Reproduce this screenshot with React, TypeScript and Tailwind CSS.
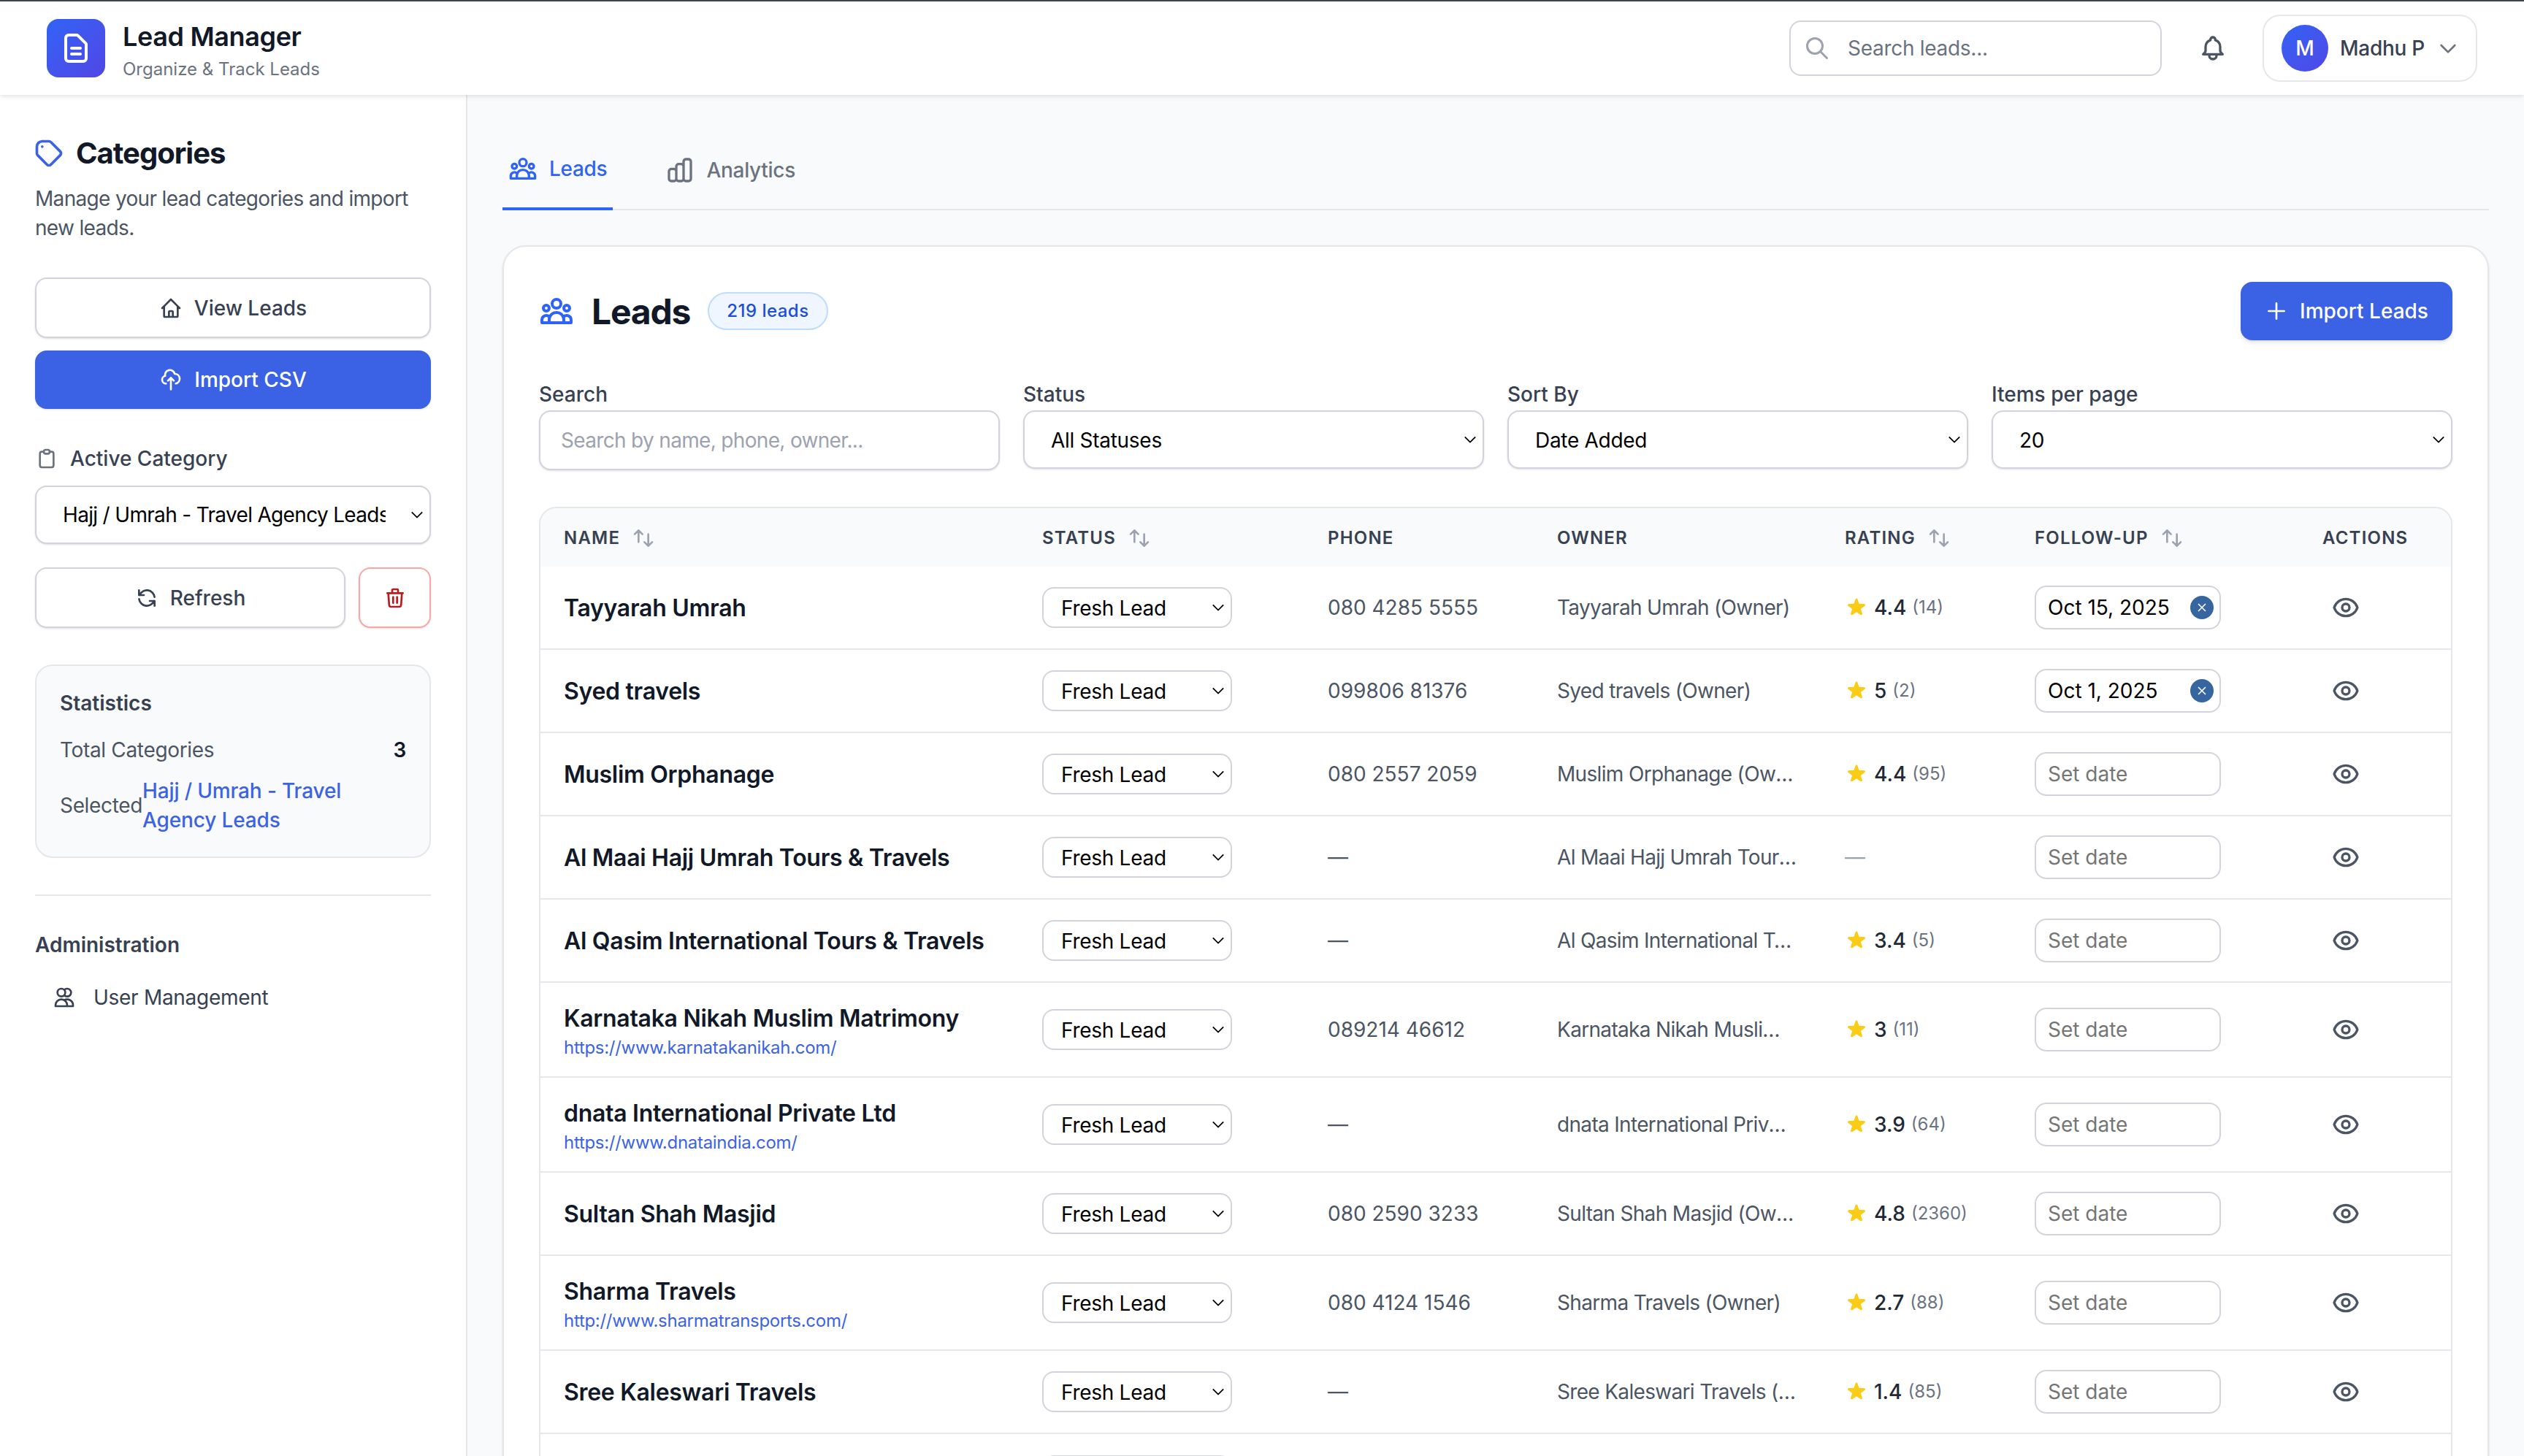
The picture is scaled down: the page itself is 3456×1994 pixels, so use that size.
import {
  HiOutlineBell,
  HiOutlineChartBar,
  HiOutlineChevronDown,
  HiOutlineClipboard,
  HiOutlineCloudUpload,
  HiOutlineDocumentText,
  HiOutlineEye,
  HiOutlineHome,
  HiOutlinePlus,
  HiOutlineRefresh,
  HiOutlineSearch,
  HiOutlineSwitchVertical,
  HiOutlineTag,
  HiOutlineTrash,
  HiOutlineUserGroup,
  HiOutlineUsers,
  HiStar,
} from "react-icons/hi"

type Lead = {
  name: string
  url?: string
  phone?: string
  owner: string
  rating?: string
  count?: string
  date?: string
}

const leads: Lead[] = [
  { name: "Tayyarah Umrah", phone: "080 4285 5555", owner: "Tayyarah Umrah (Owner)", rating: "4.4", count: "(14)", date: "Oct 15, 2025" },
  { name: "Syed travels", phone: "099806 81376", owner: "Syed travels (Owner)", rating: "5", count: "(2)", date: "Oct 1, 2025" },
  { name: "Muslim Orphanage", phone: "080 2557 2059", owner: "Muslim Orphanage (Owner)", rating: "4.4", count: "(95)" },
  { name: "Al Maai Hajj Umrah Tours & Travels", owner: "Al Maai Hajj Umrah Tours & Travels (Owner)" },
  { name: "Al Qasim International Tours & Travels", owner: "Al Qasim International Tours & Travels (Owner)", rating: "3.4", count: "(5)" },
  { name: "Karnataka Nikah Muslim Matrimony", url: "https://www.karnatakanikah.com/", phone: "089214 46612", owner: "Karnataka Nikah Muslim Matrimony (Owner)", rating: "3", count: "(11)" },
  { name: "dnata International Private Ltd", url: "https://www.dnataindia.com/", owner: "dnata International Private Ltd (Owner)", rating: "3.9", count: "(64)" },
  { name: "Sultan Shah Masjid", phone: "080 2590 3233", owner: "Sultan Shah Masjid (Owner)", rating: "4.8", count: "(2360)" },
  { name: "Sharma Travels", url: "http://www.sharmatransports.com/", phone: "080 4124 1546", owner: "Sharma Travels (Owner)", rating: "2.7", count: "(88)" },
  { name: "Sree Kaleswari Travels", owner: "Sree Kaleswari Travels (Owner)", rating: "1.4", count: "(85)" },
]

function SelectChevron() {
  return (
    <svg viewBox="0 0 20 12" className="pointer-events-none absolute right-[10px] top-1/2 h-[12px] w-[18px] -translate-y-1/2 text-black" fill="none" stroke="currentColor" strokeWidth="2">
      <path d="M2 2l8 8 8-8" />
    </svg>
  )
}

function NativeSelect({ value, className, wrapClass = "" }: { value: string; className: string; wrapClass?: string }) {
  return (
    <div className={`relative ${wrapClass}`}>
      <select defaultValue={value} className={`block w-full appearance-none border-2 border-[#d1d5db] bg-white text-[28px] text-black outline-none ${className}`}>
        <option>{value}</option>
      </select>
      <SelectChevron />
    </div>
  )
}

function SortHead({ label }: { label: string }) {
  return (
    <span className="flex items-center gap-4">
      {label}
      <HiOutlineSwitchVertical className="h-[32px] w-[32px] text-[#9ca3af]" />
    </span>
  )
}

function LeadRow({ lead }: { lead: Lead }) {
  const td = "border-b-2 border-[#e5e7eb] px-[32px] align-middle"
  return (
    <tr className={lead.url ? "h-[130px]" : "h-[114px]"}>
      <td className={td}>
        <div className="pt-[1px] text-[32px] font-semibold leading-[48px] text-[#111827]">{lead.name}</div>
        {lead.url && <div className="text-[24px] leading-[32px] text-[#3b63e4]">{lead.url}</div>}
      </td>
      <td className={td}>
        <NativeSelect value="Fresh Lead" wrapClass="w-[260px]" className="h-[56px] rounded-[16px] pl-[24px] pr-[40px] pt-[2px]" />
      </td>
      <td className={`${td} text-[28px] tracking-normal text-[#4b5563]`}>{lead.phone ?? "—"}</td>
      <td className={`${td} text-[28px] tracking-[-0.024em] text-[#4b5563]`}>
        <div className="w-[328px] truncate">{lead.owner}</div>
      </td>
      <td className={td}>
        {lead.rating ? (
          <div className="flex items-center gap-2 tracking-normal">
            <HiStar className="h-[32px] w-[32px] text-[#facc15]" />
            <span className="text-[28px] font-medium text-[#1f2937]">{lead.rating}</span>
            <span className="text-[24px] text-[#6b7280]">{lead.count}</span>
          </div>
        ) : (
          <span className="text-[28px] text-[#9ca3af]">—</span>
        )}
      </td>
      <td className={td}>
        <div className="relative w-[255px]">
          <input
            readOnly
            value={lead.date ?? ""}
            placeholder="Set date"
            className="block h-[60px] w-full rounded-[16px] border-2 border-[#d1d5db] bg-white pl-[16px] text-[28px] tracking-normal text-black outline-none placeholder:text-[#757575]"
          />
          {lead.date && (
            <span className="absolute right-[10px] top-[14px] flex h-[32px] w-[32px] items-center justify-center rounded-full bg-[#36659f]">
              <svg viewBox="0 0 12 12" className="h-[12px] w-[12px]" fill="none" stroke="white" strokeWidth="1.6">
                <path d="M1 1l10 10M11 1L1 11" />
              </svg>
            </span>
          )}
        </div>
      </td>
      <td className={td}>
        <button className="p-3 text-[#4b5563]">
          <HiOutlineEye className="h-[40px] w-[40px]" />
        </button>
      </td>
    </tr>
  )
}

function Sidebar() {
  return (
    <aside className="w-[640px] shrink-0 border-r-2 border-[#e5e7eb] bg-white p-[48px]">
      <div className="mt-[4px] flex items-center gap-[15px]">
        <HiOutlineTag className="-ml-[3px] h-[44px] w-[44px] text-[#3b63e4]" />
        <h2 className="text-[40px] font-bold leading-[56px] tracking-[-0.025em] text-[#111827]">Categories</h2>
      </div>
      <p className="mt-[14px] text-[28px] leading-[40px] tracking-[-0.024em] text-[#4b5563]">Manage your lead categories and import new leads.</p>

      <button className="mt-[48px] flex h-[83px] w-full items-center justify-center gap-4 rounded-[16px] border-2 border-[#d1d5db] bg-white text-[28px] font-medium tracking-normal text-[#374151] shadow-sm">
        <HiOutlineHome className="h-[32px] w-[32px]" />
        View Leads
      </button>
      <button className="mt-[17px] flex h-[80px] w-full items-center justify-center gap-4 rounded-[16px] bg-[#3b62e4] text-[28px] font-medium tracking-normal text-white shadow-sm">
        <HiOutlineCloudUpload className="h-[32px] w-[32px]" />
        Import CSV
      </button>

      <div className="mt-[48px] flex items-center gap-4 text-[28px] font-medium leading-[40px] tracking-normal text-[#374151]">
        <HiOutlineClipboard className="h-[32px] w-[32px] text-[#6b7280]" />
        Active Category
      </div>
      <div className="mt-[17px]">
        <NativeSelect value="Hajj / Umrah - Travel Agency Leads" className="h-[80px] rounded-[16px] pl-[36px] pr-[60px] tracking-[-0.024em] shadow-sm" />
      </div>

      <div className="mt-[32px] flex gap-[18px]">
        <button className="flex h-[83px] flex-1 items-center justify-center gap-4 rounded-[16px] border-2 border-[#d1d5db] bg-white text-[28px] font-medium tracking-normal text-[#374151] shadow-sm">
          <HiOutlineRefresh className="h-[32px] w-[32px]" />
          Refresh
        </button>
        <button className="flex h-[83px] w-[99px] items-center justify-center rounded-[16px] border-2 border-[#fca5a5] bg-white text-[#b91c1c] shadow-sm">
          <HiOutlineTrash className="h-[32px] w-[32px]" />
        </button>
      </div>

      <div className="mt-[50px] rounded-[24px] border-2 border-[#e5e7eb] bg-[#f9fafb] px-[32px] pb-[30px] pt-[31px]">
        <h3 className="text-[28px] font-semibold leading-[40px] tracking-normal text-[#374151]">Statistics</h3>
        <div className="mt-[24px] flex items-center justify-between text-[28px] leading-[40px] tracking-[-0.012em]">
          <span className="text-[#4b5563]">Total Categories</span>
          <span className="font-semibold text-[#111827]">3</span>
        </div>
        <div className="mt-[16px] flex items-center text-[28px] leading-[40px] tracking-[-0.012em]">
          <span className="text-[#4b5563]">Selected</span>
          <span className="font-medium tracking-[-0.005em] text-[#3b63e4]">Hajj / Umrah - Travel Agency Leads</span>
        </div>
      </div>

      <div className="mt-[50px] border-t-2 border-[#e5e7eb] pt-[47px]">
        <h3 className="text-[28px] font-semibold leading-[40px] tracking-normal text-[#374151]">Administration</h3>
        <div className="mt-[32px] flex items-center gap-[24px] pl-[24px] text-[28px] leading-[40px] text-[#374151]">
          <HiOutlineUsers className="h-[32px] w-[32px]" />
          User Management
        </div>
      </div>
    </aside>
  )
}

export default function App() {
  return (
    <div className="flex h-[1994px] w-full flex-col overflow-hidden bg-[#f9fafb] font-['Inter',sans-serif] tracking-[-0.018em]">
      <header className="relative z-10 flex h-[130px] shrink-0 items-center border-t-2 border-[#3f444b] bg-white px-[64px] shadow-[0_2px_6px_rgba(0,0,0,0.12)]">
        <div className="flex h-[80px] w-[80px] items-center justify-center rounded-[16px] bg-gradient-to-br from-[#2f63f5] to-[#4f46e5] text-white">
          <HiOutlineDocumentText className="h-[48px] w-[48px]" />
        </div>
        <div className="ml-[24px]">
          <div className="text-[36px] font-semibold leading-[58px] tracking-[-0.01em] text-[#111827]">Lead Manager</div>
          <div className="text-[24px] leading-[32px] tracking-normal text-[#6b7280]">Organize &amp; Track Leads</div>
        </div>
        <div className="ml-auto flex items-center gap-[32px]">
          <div className="relative mr-[2px] w-[510px]">
            <HiOutlineSearch className="absolute left-[20px] top-[20px] h-[36px] w-[36px] text-[#9ca3af]" />
            <input
              placeholder="Search leads..."
              className="block h-[76px] w-full rounded-[16px] border-2 border-[#d1d5db] bg-white pl-[78px] text-[28px] outline-none placeholder:text-[#6b7280]"
            />
          </div>
          <button className="p-[16px] text-[#4b5563]">
            <HiOutlineBell className="h-[40px] w-[40px]" />
          </button>
          <button className="flex h-[92px] w-[294px] items-center gap-4 rounded-[24px] border-2 border-[#e5e7eb] bg-white pl-[24px]">
            <span className="flex h-[64px] w-[64px] items-center justify-center rounded-full bg-gradient-to-br from-[#2f63f5] to-[#4f46e5] text-[28px] font-medium text-white">M</span>
            <span className="text-[28px] font-medium text-[#374151]">Madhu P</span>
            <HiOutlineChevronDown className="h-[32px] w-[32px] text-[#6b7280]" />
          </button>
        </div>
      </header>

      <div className="flex min-h-0 flex-1">
        <Sidebar />
        <main className="min-w-0 flex-1 px-[48px] pt-[48px]">
          <div className="flex gap-[64px] border-b-2 border-[#e5e7eb]">
            <div className="-mb-[2px] flex h-[110px] items-center gap-4 border-b-4 border-[#2f63f5] px-2 text-[28px] font-medium text-[#2f63f5]">
              <HiOutlineUserGroup className="h-[40px] w-[40px]" />
              Leads
            </div>
            <div className="-mb-[2px] flex h-[110px] items-center gap-4 px-2 text-[28px] font-medium text-[#6b7280]">
              <HiOutlineChartBar className="h-[40px] w-[40px]" />
              Analytics
            </div>
          </div>

          <section className="mt-[48px] rounded-[32px] border-2 border-[#e5e7eb] bg-white p-[48px] shadow-sm">
            <div className="flex h-[80px] items-center">
              <HiOutlineUserGroup className="h-[48px] w-[48px] text-[#2f63f5]" />
              <h1 className="ml-[24px] pt-[2px] text-[48px] font-bold leading-[64px] tracking-[-0.025em] text-[#111827]">Leads</h1>
              <span className="ml-[24px] flex h-[52px] items-center rounded-full border-2 border-[#bfdbfe] bg-[#eff6ff] px-[24px] text-[24px] font-medium tracking-[0.02em] text-[#1d4ed8]">219 leads</span>
              <button className="ml-auto flex h-[80px] w-[290px] items-center justify-center gap-4 rounded-[16px] bg-[#3b62e4] text-[28px] font-medium tracking-normal text-white shadow-md">
                <HiOutlinePlus className="h-[32px] w-[32px]" />
                Import Leads
              </button>
            </div>

            <div className="mt-[54px] grid grid-cols-4 gap-[32px]">
              <div>
                <div className="mb-[2px] text-[28px] font-medium leading-[40px] tracking-normal text-[#374151]">Search</div>
                <input
                  placeholder="Search by name, phone, owner..."
                  className="block h-[82px] w-full rounded-[16px] border-2 border-[#d1d5db] bg-white px-[28px] text-[28px] tracking-[-0.024em] shadow-sm outline-none placeholder:text-[#9ca3af]"
                />
              </div>
              <div>
                <div className="mb-[2px] text-[28px] font-medium leading-[40px] tracking-normal text-[#374151]">Status</div>
                <NativeSelect value="All Statuses" className="h-[80px] rounded-[16px] pl-[36px] pr-[40px] pt-[1px] shadow-sm" />
              </div>
              <div>
                <div className="mb-[2px] text-[28px] font-medium leading-[40px] tracking-normal text-[#374151]">Sort By</div>
                <NativeSelect value="Date Added" className="h-[80px] rounded-[16px] pl-[36px] pr-[40px] pt-[1px] shadow-sm" />
              </div>
              <div>
                <div className="mb-[2px] text-[28px] font-medium leading-[40px] tracking-normal text-[#374151]">Items per page</div>
                <NativeSelect value="20" className="h-[80px] rounded-[16px] pl-[36px] pr-[40px] pt-[1px] shadow-sm" />
              </div>
            </div>

            <div className="mt-[50px] overflow-hidden rounded-[24px] border-2 border-[#e5e7eb]">
              <table className="w-full table-fixed border-separate border-spacing-0">
                <thead>
                  <tr className="h-[80px] bg-[#f9fafb] text-left text-[24px] font-semibold uppercase tracking-[0.05em] text-[#374151]">
                    <th className="w-[655px] px-[32px] pt-[2px] font-semibold"><SortHead label="Name" /></th>
                    <th className="w-[391px] px-[32px] pt-[2px] font-semibold"><SortHead label="Status" /></th>
                    <th className="w-[314px] px-[32px] pt-[2px] font-semibold">Phone</th>
                    <th className="w-[394px] px-[32px] pt-[2px] font-semibold">Owner</th>
                    <th className="w-[260px] px-[32px] pt-[2px] font-semibold"><SortHead label="Rating" /></th>
                    <th className="w-[394px] px-[32px] pt-[2px] font-semibold"><SortHead label="Follow-up" /></th>
                    <th className="w-[208px] px-[32px] pt-[2px] font-semibold">Actions</th>
                  </tr>
                </thead>
                <tbody>
                  {leads.map((lead) => (
                    <LeadRow key={lead.name} lead={lead} />
                  ))}
                  <tr className="h-[114px]">
                    <td className="px-[32px]" />
                    <td className="px-[32px]">
                      <NativeSelect value="Fresh Lead" wrapClass="w-[260px]" className="h-[56px] rounded-[16px] pl-[24px] pr-[40px] pt-[2px]" />
                    </td>
                    <td colSpan={5} />
                  </tr>
                </tbody>
              </table>
            </div>
          </section>
        </main>
      </div>
    </div>
  )
}
